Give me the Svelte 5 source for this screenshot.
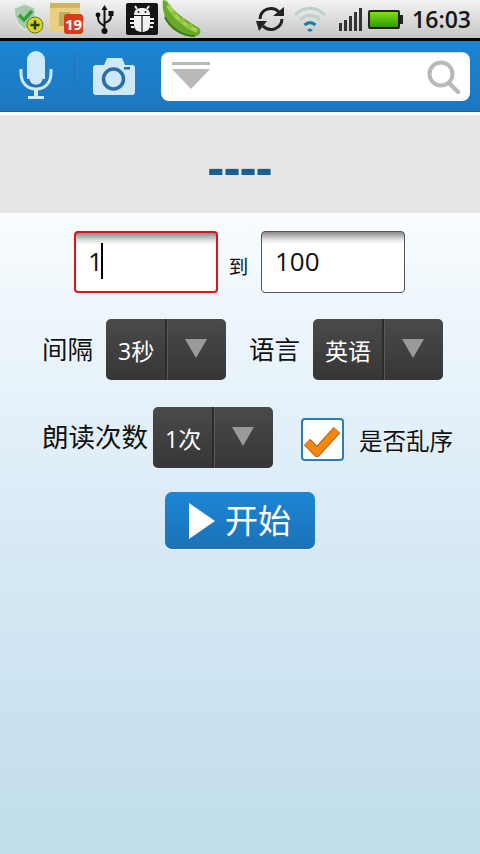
<script>
  let from = '1';
  let to = '100';
</script>

<div class="screen">
  <header class="status">
    <div class="status-left">
      <svg width="34" height="34" viewBox="0 0 34 34" class="ic-shield">
        <path d="M3 7 L14 3 L24 7 C25 17 22 24 14 29 C6 24 3 17 3 7Z" fill="#a9c9a8" stroke="#dfe8df" stroke-width="1.5"/>
        <path d="M8 14 L13 19 L21 10" fill="none" stroke="#35a03a" stroke-width="3.5"/>
        <circle cx="24" cy="24" r="8" fill="#d9d21e" stroke="#6b7a20"/>
        <path d="M24 19.5 V28.5 M19.5 24 H28.5" stroke="#1d3d12" stroke-width="2.4"/>
      </svg>
      <div class="cal">
        <svg width="30" height="32" viewBox="0 0 30 32">
          <rect x="0" y="3" width="30" height="29" rx="2" fill="#e9cf7f"/>
          <rect x="0" y="3" width="30" height="5" fill="#d3b45e"/>
          <path d="M9 12 H20 V26 H9Z" fill="#b8b35c"/>
        </svg>
        <span class="badge">19</span>
      </div>
      <svg width="20" height="32" viewBox="0 0 20 32" class="ic-usb">
        <path d="M9.5 2 L6.5 7 H8.5 V27 H10.5 V7 H12.5Z" fill="#111"/>
        <circle cx="9.5" cy="28" r="3" fill="#111"/>
        <path d="M9.5 23 C3 20 3 17 3 13 M9.5 20 C16 18 16 15 16 12" fill="none" stroke="#111" stroke-width="2"/>
        <circle cx="3" cy="12" r="2.4" fill="#111"/>
        <rect x="13.5" y="8" width="5" height="5" fill="#111"/>
      </svg>
      <svg width="32" height="32" viewBox="0 0 32 32" class="ic-bug">
        <rect width="32" height="32" rx="2" fill="#151515"/>
        <path d="M8 12 C8 7 11 5 16 5 C21 5 24 7 24 12Z" fill="#f1f1f1"/>
        <path d="M8 13 H24 V22 C24 27 20 29 16 29 C12 29 8 27 8 22Z" fill="#f1f1f1"/>
        <path d="M16 13 V29" stroke="#151515" stroke-width="1.2"/>
        <path d="M11 6 L9 3 M21 6 L23 3 M8 16 H4 M8 20 H4 M8 24 H5 M24 16 H28 M24 20 H28 M24 24 H27" stroke="#f1f1f1" stroke-width="2"/>
        <circle cx="12.5" cy="9" r="1" fill="#151515"/><circle cx="19.5" cy="9" r="1" fill="#151515"/>
      </svg>
      <svg width="40" height="38" viewBox="0 0 40 38" class="ic-pea">
        <path d="M1 0 C5 0 6 3 9 7 C16 15 27 22 37 28 C40 31 38 36 33 36 C20 37 8 30 3 17 C1 11 0 5 1 0Z" fill="#69a82b"/>
        <path d="M6 5 C11 15 22 25 35 31" fill="none" stroke="#a5d14e" stroke-width="4"/>
        <path d="M3 17 C8 28 20 36 33 36" fill="none" stroke="#3d7a1a" stroke-width="2"/>
        <circle cx="12" cy="13" r="2.5" fill="#8cc23c"/><circle cx="20" cy="20" r="2.5" fill="#8cc23c"/><circle cx="28" cy="26" r="2.5" fill="#8cc23c"/>
      </svg>
    </div>
    <div class="status-right">
      <svg width="32" height="30" viewBox="0 0 32 30" class="ic-sync">
        <path d="M5 15 A11 11 0 0 1 24 8" fill="none" stroke="#222" stroke-width="3"/>
        <path d="M19 11 H30 V2Z" fill="#222" transform="translate(-1 1)"/>
        <path d="M27 15 A11 11 0 0 1 8 22" fill="none" stroke="#222" stroke-width="3"/>
        <path d="M1 17 H12 L4 27Z" fill="#222"/>
      </svg>
      <svg width="34" height="30" viewBox="0 0 34 30" class="ic-wifi">
        <path d="M2 11 C11 2 23 2 32 11" fill="none" stroke="#bdd0ce" stroke-width="3"/>
        <path d="M7 16 C13 10 21 10 27 16" fill="none" stroke="#bdd0ce" stroke-width="3"/>
        <path d="M11.500 21 C15 18 19 18 22.500 21" fill="none" stroke="#1c7ea8" stroke-width="3"/>
        <path d="M14 26 C16 24 18 24 20 26 L17 28Z" fill="#1c7ea8"/>
      </svg>
      <div class="signal"><i></i><i></i><i></i><i></i><i></i></div>
      <div class="battery"><span></span></div>
      <span class="clock">16:03</span>
    </div>
  </header>

  <nav class="toolbar">
    <button class="tool mic" aria-label="语音">
      <svg width="34" height="50" viewBox="0 0 34 50">
        <rect x="8" y="0" width="18" height="36" rx="9" fill="#cfe9f9"/>
        <path d="M2 18 V22 C2 32 8 38 17 38 C26 38 32 32 32 22 V18" fill="none" stroke="#cfe9f9" stroke-width="3"/>
        <path d="M9 28 C10 33 13 35 17 35 C21 35 24 33 25 28" fill="none" stroke="#2a6fa8" stroke-width="2.500"/>
        <path d="M15 38 H19 V45 H25 V48 H9 V45 H15Z" fill="#cfe9f9"/>
      </svg>
    </button>
    <div class="divider"></div>
    <button class="tool cam" aria-label="拍照">
      <svg width="42" height="38" viewBox="0 0 42 38">
        <path d="M3 8 H11 L14 1 H29 L32 8 H39 C41 8 42 9 42 11 V35 C42 37 41 38 39 38 H3 C1 38 0 37 0 35 V11 C0 9 1 8 3 8Z" fill="#cfe9f9"/>
        <circle cx="20.500" cy="22" r="10" fill="none" stroke="#2a6fa8" stroke-width="3.500"/>
        <rect x="31" y="10" width="6" height="2.500" fill="#2a6fa8"/>
      </svg>
    </button>
    <div class="search">
      <svg width="40" height="30" viewBox="0 0 40 30">
        <rect x="0" y="0" width="38" height="3" fill="#b9b9b9"/>
        <path d="M0 7 H38 L19 27Z" fill="#b9b9b9"/>
      </svg>
      <svg width="34" height="34" viewBox="0 0 34 34">
        <circle cx="14" cy="14" r="11.500" fill="none" stroke="#b9b9b9" stroke-width="4"/>
        <path d="M22 23 L31 32" stroke="#b9b9b9" stroke-width="4.500" stroke-linecap="round"/>
      </svg>
    </div>
  </nav>

  <section class="readout"><span>----</span></section>

  <main class="form">
    <div class="range">
      <div class="field focused"><span>{from}</span><i class="caret"></i></div>
      <span class="to">到</span>
      <div class="field"><span>{to}</span></div>
    </div>

    <div class="row row-two">
      <span class="label">间隔</span>
      <div class="spinner"><span class="val">3秒</span><span class="arrow"></span></div>
      <span class="label second">语言</span>
      <div class="spinner wide"><span class="val">英语</span><span class="arrow"></span></div>
    </div>

    <div class="row row-three">
      <span class="label long">朗读次数</span>
      <div class="spinner tight"><span class="val">1次</span><span class="arrow"></span></div>
      <div class="check">
        <svg width="38" height="34" viewBox="0 0 38 34">
          <path d="M3 19 L13 29 L33 7" fill="none" stroke="#b5620a" stroke-width="9"/>
          <path d="M3 19 L13 29 L33 7" fill="none" stroke="#f5860f" stroke-width="7"/>
        </svg>
      </div>
      <span class="check-label">是否乱序</span>
    </div>

    <button class="start">
      <svg width="26" height="36" viewBox="0 0 26 36"><path d="M0 0 L26 18 L0 36Z" fill="#fff"/></svg>
      <span>开始</span>
    </button>
  </main>
</div>

<style>
  :global(body) {
    margin: 0;
  }

  .screen {
    width: 480px;
    height: 854px;
    display: flex;
    flex-direction: column;
    overflow: hidden;
    font-family: "Open Sans", "Noto Sans CJK SC", sans-serif;
    color: #111;
  }

  .status {
    flex: 0 0 38px;
    height: 38px;
    display: flex;
    justify-content: space-between;
    background: linear-gradient(#f2f3f2, #c4c6c4);
    border-bottom: 3px solid #050505;
  }

  .status-left {
    display: flex;
    align-items: flex-start;
  }

  .ic-shield {
    margin: 1px 0 0 11px;
  }

  .cal {
    position: relative;
    margin: 0 0 0 5px;
    width: 30px;
    height: 34px;
  }

  .badge {
    position: absolute;
    left: 14px;
    top: 14px;
    width: 19px;
    height: 20px;
    border-radius: 3px;
    background: #dd3a1c;
    color: #fff;
    font-size: 15px;
    font-weight: 700;
    line-height: 20px;
    text-align: center;
  }

  .ic-usb {
    margin: 3px 0 0 15px;
  }

  .ic-bug {
    margin: 3px 0 0 11px;
  }

  .ic-pea {
    margin: 0 0 0 4px;
  }

  .status-right {
    display: flex;
    align-items: center;
    padding-right: 9px;
  }

  .status-right svg {
    margin-right: 4px;
  }

  .ic-sync {
    margin-right: 6px !important;
  }

  .signal {
    display: flex;
    align-items: flex-end;
    gap: 2px;
    height: 23px;
    margin: 0 6px 0 8px;
  }

  .signal i {
    width: 3px;
    background: #333;
  }

  .signal i:nth-child(1) { height: 8px; }
  .signal i:nth-child(2) { height: 11px; }
  .signal i:nth-child(3) { height: 15px; }
  .signal i:nth-child(4) { height: 19px; }
  .signal i:nth-child(5) { height: 23px; }

  .battery {
    position: relative;
    width: 28px;
    height: 15px;
    padding: 2px;
    border-radius: 2px;
    background: #222;
    box-sizing: content-box;
    margin-right: 12px;
  }

  .battery::after {
    content: "";
    position: absolute;
    right: -3px;
    top: 5px;
    width: 3px;
    height: 9px;
    background: #222;
  }

  .battery span {
    display: block;
    height: 100%;
    background: linear-gradient(#7fe01a, #2f9a06);
  }

  .clock {
    font-size: 23px;
    font-weight: 600;
    color: #151515;
  }

  .toolbar {
    flex: 0 0 71px;
    display: flex;
    align-items: center;
    background: linear-gradient(#1b85d2, #1d77be);
    border-bottom: 1px solid #15639f;
    box-sizing: border-box;
  }

  .tool {
    display: flex;
    padding: 0;
    border: 0;
    background: none;
  }

  .mic {
    margin-left: 19px;
  }

  .divider {
    width: 1px;
    height: 44px;
    margin: 0 18px 0 21px;
    background: #2572b2;
  }

  .search {
    width: 309px;
    height: 49px;
    margin-left: 26px;
    padding: 0 9px 0 11px;
    box-sizing: border-box;
    display: flex;
    align-items: center;
    justify-content: space-between;
    background: #fff;
    border-radius: 8px;
    border-top: 1px solid #d4d4d4;
  }

  .readout {
    flex: 0 0 98px;
    margin-top: 3px;
    display: flex;
    align-items: center;
    justify-content: center;
    background: #e7e7e7;
  }

  .readout span {
    font-size: 50px;
    font-weight: 700;
    line-height: 1;
    color: #1a5f8e;
    margin-top: 4px;
  }

  .form {
    flex: 1;
    display: flex;
    flex-direction: column;
    background: linear-gradient(#f8fcfe 0%, #d6e8f5 54%, #c0ddec 100%);
  }

  .range {
    display: flex;
    align-items: center;
    margin: 18px 0 0 74px;
  }

  .field {
    width: 144px;
    height: 62px;
    box-sizing: border-box;
    display: flex;
    align-items: center;
    padding: 0 0 2px 13px;
    border: 1px solid #555;
    border-radius: 4px;
    background: linear-gradient(#8a8a8a 0, #e6e6e6 8px, #fff 12px);
    font-size: 26px;
  }

  .focused {
    border: 2px solid #de1418;
    padding-left: 12px;
  }

  .caret {
    width: 2px;
    height: 36px;
    margin-left: -2px;
    background: #000;
  }

  .to {
    width: 43px;
    padding-right: 2px;
    box-sizing: border-box;
    text-align: center;
    font-size: 19.500px;
    margin-top: 6px;
  }

  .row {
    display: flex;
    align-items: center;
    font-size: 25.500px;
  }

  .row-two {
    margin: 26px 0 0 42px;
  }

  .row-three {
    margin: 27px 0 0 42px;
  }

  .label {
    line-height: 61px;
  }

  .long {
    font-size: 26.500px;
  }

  .second {
    margin-left: 23px;
  }

  .spinner {
    width: 120px;
    height: 61px;
    margin-left: 13px;
    display: flex;
    border-radius: 5px;
    background: linear-gradient(#4a4a4a, #363636);
    color: #fff;
    font-size: 23px;
  }

  .wide {
    width: 130px;
  }

  .tight {
    margin-left: 5px;
  }

  .val {
    flex: 1;
    display: flex;
    align-items: center;
    padding-left: 12px;
    border-right: 2px solid #2b2b2b;
    box-shadow: 1px 0 0 #5a5a5a;
  }

  .arrow {
    flex: 0 0 59px;
    display: flex;
    align-items: center;
    justify-content: center;
  }

  .arrow::before {
    content: "";
    width: 0;
    height: 0;
    margin: 0 2px 3px 0;
    border-left: 11px solid transparent;
    border-right: 11px solid transparent;
    border-top: 19px solid #9a9a9a;
  }

  .check {
    width: 43px;
    height: 43px;
    margin: 4px 0 0 28px;
    box-sizing: border-box;
    display: flex;
    align-items: center;
    justify-content: center;
    border: 2px solid #2a7db5;
    border-radius: 4px;
    background: #fff;
  }

  .check-label {
    margin: 4px 0 0 15px;
    font-size: 23.500px;
  }

  .start {
    align-self: flex-start;
    width: 150px;
    height: 57px;
    margin: 24px 0 0 165px;
    padding: 0 0 0 24px;
    display: flex;
    align-items: center;
    gap: 10px;
    border: 0;
    border-radius: 7px;
    background: linear-gradient(#1c86d6, #1b72b6);
    box-shadow: 0 1px 0 #f4f9fc;
    color: #fff;
    font-family: inherit;
    font-size: 33px;
  }

  .start span {
    margin-bottom: 4px;
  }
</style>
